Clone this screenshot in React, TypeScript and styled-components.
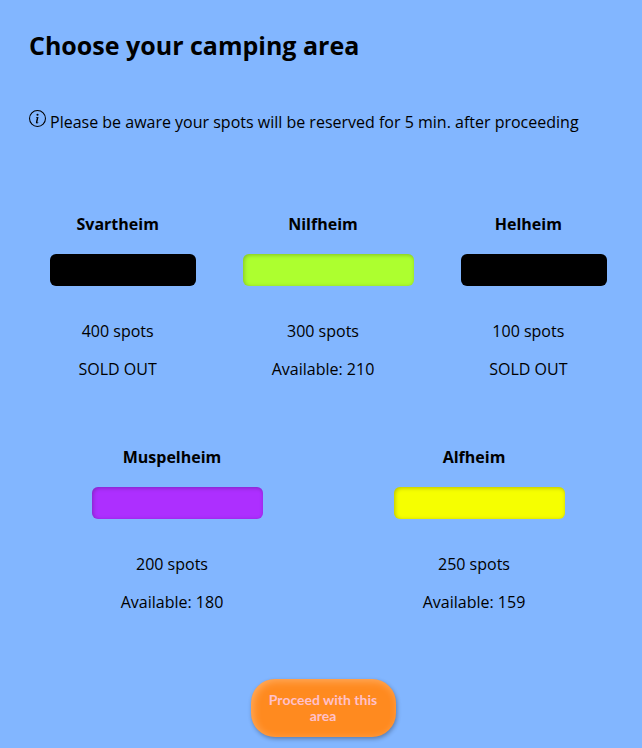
import React, { useState } from "react";
import styled, { createGlobalStyle } from "styled-components";

const GlobalStyle = createGlobalStyle`
  *, *::before, *::after { box-sizing: border-box; }
  body {
    margin: 0;
    background: #82b6ff;
    color: #000;
    font: 16px/22px "Open Sans", sans-serif;
  }
`;

const Page = styled.main`
  padding: 28px 25px 11px 29px;
`;

const Title = styled.h1`
  margin: 0;
  font-size: 25px;
  line-height: 34px;
  font-weight: 700;
`;

const Notice = styled.p`
  display: flex;
  align-items: center;
  gap: 4px;
  margin: 48px 0 0;
`;

const InfoSvg = styled.svg`
  flex: none;
  width: 17px;
  height: 17px;
  margin-bottom: 6px;
`;

const Areas = styled.form`
  margin-top: 80px;
`;

const AreaRow = styled.div<{ $gap: number }>`
  display: flex;
  gap: ${(p) => p.$gap}px;
  margin-bottom: 66px;
`;

const Area = styled.section`
  flex: 1 1 0;
  min-width: 0;
  display: flex;
  flex-direction: column;
  align-items: center;
`;

const AreaName = styled.label`
  margin-bottom: 19px;
  font-weight: 700;
`;

const AreaRadio = styled.input<{ $color: string }>`
  appearance: none;
  width: 171px;
  height: 32px;
  margin: 0 0 0 11px;
  border-radius: 6px;
  background: ${(p) => p.$color};
  box-shadow: inset 1px 1px 4px rgba(0, 0, 0, 0.25);
  cursor: pointer;

  &:disabled {
    width: 146px;
    box-shadow: none;
    cursor: default;
  }
`;

const Detail = styled.p`
  margin: 16px 0 0;

  ${AreaRadio} + & {
    margin-top: 34px;
  }
`;

const Proceed = styled.button`
  display: block;
  width: 145px;
  height: 58px;
  margin: 0 auto;
  padding: 0 16px;
  border: 0;
  border-radius: 24px;
  background: #ff8a1f;
  color: #ffc0cb;
  font: 700 14px/16px Lato, sans-serif;
  box-shadow: inset 2px 2px 8px rgba(255, 255, 255, 0.3), 1px 2px 4px rgba(0, 0, 0, 0.3);
  cursor: pointer;
`;

type AreaInfo = { name: string; color: string; spots: number; available: number };

const rows: { gap: number; areas: AreaInfo[] }[] = [
  {
    gap: 28,
    areas: [
      { name: "Svartheim", color: "#000", spots: 400, available: 0 },
      { name: "Nilfheim", color: "#adff2f", spots: 300, available: 210 },
      { name: "Helheim", color: "#000", spots: 100, available: 0 },
    ],
  },
  {
    gap: 16,
    areas: [
      { name: "Muspelheim", color: "#ad2fff", spots: 200, available: 180 },
      { name: "Alfheim", color: "#f6ff00", spots: 250, available: 159 },
    ],
  },
];

export default function App() {
  const [selected, setSelected] = useState("");

  return (
    <Page>
      <GlobalStyle />
      <Title>Choose your camping area</Title>
      <Notice>
        <InfoSvg viewBox="0 0 16 16" aria-hidden="true">
          <path d="M8 15A7 7 0 1 1 8 1a7 7 0 0 1 0 14m0 1A8 8 0 1 0 8 0a8 8 0 0 0 0 16" />
          <path d="m8.93 6.588-2.29.287-.082.38.45.083c.294.07.352.176.288.469l-.738 3.468c-.194.897.105 1.319.808 1.319.545 0 1.178-.252 1.465-.598l.088-.416c-.2.176-.492.246-.686.246-.275 0-.375-.193-.304-.533zM9 4.5a1 1 0 1 1-2 0 1 1 0 0 1 2 0" />
        </InfoSvg>
        Please be aware your spots will be reserved for 5 min. after proceeding
      </Notice>
      <Areas onSubmit={(e) => e.preventDefault()}>
        {rows.map((row) => (
          <AreaRow key={row.areas[0].name} $gap={row.gap}>
            {row.areas.map((area) => (
              <Area key={area.name}>
                <AreaName htmlFor={area.name}>{area.name}</AreaName>
                <AreaRadio
                  type="radio"
                  name="area"
                  id={area.name}
                  value={area.name}
                  checked={selected === area.name}
                  onChange={() => setSelected(area.name)}
                  $color={area.color}
                  disabled={area.available === 0}
                />
                <Detail>{area.spots} spots</Detail>
                <Detail>{area.available ? `Available: ${area.available}` : "SOLD OUT"}</Detail>
              </Area>
            ))}
          </AreaRow>
        ))}
        <Proceed type="submit">Proceed with this area</Proceed>
      </Areas>
    </Page>
  );
}
